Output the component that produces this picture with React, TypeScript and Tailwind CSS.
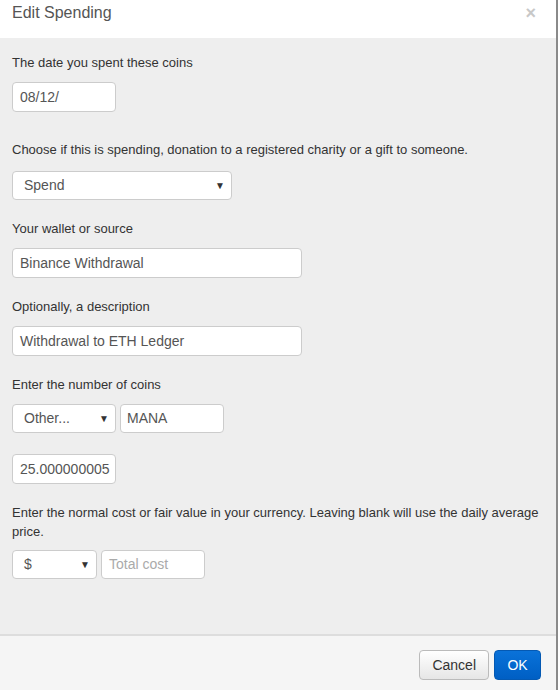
import { ReactNode } from "react";

const font = { fontFamily: '"Liberation Sans", Arial, sans-serif' };

const Label = ({ children, className = "" }: { children: ReactNode; className?: string }) => (
  <div className={`text-[13px] leading-[19px] text-[#333] ${className}`}>{children}</div>
);

const TextBox = ({
  value,
  width,
  placeholder,
  height = "h-[30px]",
  className = "",
}: {
  value?: string;
  width: string;
  placeholder?: string;
  height?: string;
  className?: string;
}) => (
  <div
    className={`${width} ${height} flex items-center px-[7px] bg-white border border-[#ccc] rounded-[4px] text-[14px] ${
      value ? "text-[#555]" : "text-[#aaa]"
    } ${className}`}
  >
    {value ?? placeholder}
  </div>
);

const Select = ({ value, width, className = "" }: { value: string; width: string; className?: string }) => (
  <div
    className={`${width} h-[29px] flex items-center justify-between pl-[11px] pr-[6px] bg-white border border-[#ccc] rounded-[4px] text-[14px] text-[#555] ${className}`}
  >
    <span>{value}</span>
    <span className="text-[10px] text-[#333]">▼</span>
  </div>
);

export default function App() {
  return (
    <div style={font} className="w-[558px] h-[690px] flex bg-[#eee] overflow-hidden">
      <div className="flex-1 flex flex-col">
        <div className="h-[38px] bg-white flex justify-between px-3 pt-[3px]">
          <div className="text-[16px] leading-[20px] text-[#555]">Edit Spending</div>
          <div className="text-[18px] leading-[18px] font-bold text-[#c8c8c8] pr-[8px] pt-[1px]">×</div>
        </div>

        <div className="flex-1 px-3 pt-[15px]">
          <Label>The date you spent these coins</Label>
          <TextBox value="08/12/" width="w-[104px]" className="mt-[10px]" />

          <Label className="mt-[28px]">Choose if this is spending, donation to a registered charity or a gift to someone.</Label>
          <Select value="Spend" width="w-[220px]" className="mt-[12px]" />

          <Label className="mt-[19px]">Your wallet or source</Label>
          <TextBox value="Binance Withdrawal" width="w-[290px]" className="mt-[10px]" />

          <Label className="mt-[19px]">Optionally, a description</Label>
          <TextBox value="Withdrawal to ETH Ledger" width="w-[290px]" className="mt-[10px]" />

          <Label className="mt-[19px]">Enter the number of coins</Label>
          <div className="flex gap-[4px] mt-[10px]">
            <Select value="Other..." width="w-[104px]" />
            <TextBox value="MANA" width="w-[104px]" height="h-[29px]" className="pl-[6px]" />
          </div>
          <TextBox value="25.000000005" width="w-[104px]" className="mt-[21px] px-[6px]" />

          <Label className="mt-[19px]">
            Enter the normal cost or fair value in your currency. Leaving blank will use the daily average price.
          </Label>
          <div className="flex gap-[4px] mt-[9px]">
            <Select value="$" width="w-[85px]" />
            <TextBox placeholder="Total cost" width="w-[104px]" height="h-[29px]" />
          </div>
        </div>

        <div className="h-[2px] bg-[#ddd]" />
        <div className="h-[54px] bg-[#f5f5f5] flex justify-end items-start gap-[5px] pt-[14px] pr-[15px]">
          <button className="h-[30px] px-[12px] text-[14px] text-[#333] rounded-[4px] border border-[#bbb] bg-gradient-to-b from-white to-[#e6e6e6]">
            Cancel
          </button>
          <button className="h-[30px] w-[47px] text-[14px] text-white rounded-[4px] border border-[#0459b3] bg-gradient-to-b from-[#0a72d9] to-[#005fc4]">
            OK
          </button>
        </div>
      </div>
      <div className="w-[2px] bg-[#8a8a8a]" />
    </div>
  );
}
